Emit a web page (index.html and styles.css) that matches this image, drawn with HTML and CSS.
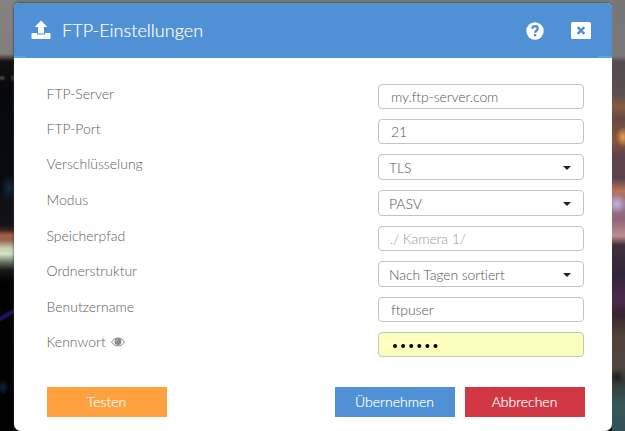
FILE: index.html
```html
<!DOCTYPE html>
<html lang="de">
<head>
<meta charset="utf-8">
<title>FTP-Einstellungen</title>
<link rel="stylesheet" href="styles.css">
</head>
<body>
<div class="scene scene-left"></div>
<main class="dialog">
  <header class="dialog-header">
    <svg class="icon-upload" viewBox="0 0 20 20"><path d="M10 .5l6.300 6.500H13v6.500H7V7H3.700z"/><path d="M1.200 13H6v1.500h8V13h4.800l.7.700v4.600l-.7.700H1.200L.5 18.300v-4.600z"/><path class="slot" d="M13.500 17h1.300m1.200 0h1.300"/></svg>
    <h1>FTP-Einstellungen</h1>
    <svg class="icon-help" viewBox="0 0 18 18"><circle cx="9" cy="9" r="8.700"/><path class="cut" d="M6.300 6.800C6.400 5 7.500 4.200 9.100 4.200c1.700 0 2.700.9 2.700 2.200 0 2-2.600 1.900-2.600 4.300"/><path class="dot" d="M7.900 12h2.400v2.200H7.900z"/></svg>
    <svg class="icon-close" viewBox="0 0 20 17"><rect width="20" height="17" rx="1.500"/><path class="cut" d="M6.700 5.200l6.600 6.600m0-6.600l-6.600 6.600"/></svg>
  </header>
  <form class="fields">
    <div class="row"><label>FTP-Server</label><div class="field">my.ftp-server.com</div></div>
    <div class="row"><label>FTP-Port</label><div class="field">21</div></div>
    <div class="row"><label>Verschlüsselung</label><div class="field select">TLS</div></div>
    <div class="row"><label>Modus</label><div class="field select">PASV</div></div>
    <div class="row"><label>Speicherpfad</label><div class="field hint">./ Kamera 1/</div></div>
    <div class="row"><label>Ordnerstruktur</label><div class="field select">Nach Tagen sortiert</div></div>
    <div class="row"><label>Benutzername</label><div class="field">ftpuser</div></div>
    <div class="row"><label>Kennwort</label><svg class="icon-eye" viewBox="0 0 14 10"><path class="lid" d="M.6 5C3.500-.2 10.500-.2 13.400 5 10.500 10.200 3.500 10.200.6 5z"/><circle cx="7" cy="4.500" r="3.400"/><path class="glint" d="M5.400 4.300C5.400 3.200 6 2.600 7 2.600"/></svg><div class="field password">
      <svg class="dots" viewBox="0 0 46 4"><circle cx="2" cy="2" r="2"/><circle cx="10.100" cy="2" r="2"/><circle cx="18.200" cy="2" r="2"/><circle cx="26.300" cy="2" r="2"/><circle cx="34.400" cy="2" r="2"/><circle cx="42.500" cy="2" r="2"/></svg></div></div>
  </form>
  <footer class="actions">
    <button class="test">Testen</button>
    <button class="apply">Übernehmen</button>
    <button class="cancel">Abbrechen</button>
  </footer>
</main>
<div class="scene scene-right"></div>
</body>
</html>
```
FILE: styles.css
```css
* { box-sizing: border-box; }
body {
  margin: 0;
  width: 625px;
  height: 431px;
  overflow: hidden;
  display: grid;
  grid-template-columns: 14px 598px 13px;
  background: linear-gradient(#7c7c7a 0 58px, #000 62px);
  font-family: Lato, "Liberation Sans", sans-serif;
  font-size: 14px;
  font-weight: 300;
  color: #555;
}
.scene-left {
  background:
    radial-gradient(ellipse 4px 3px at 2px 78px, #55584b, transparent),
    radial-gradient(ellipse 3px 4px at 13px 78px, #44483a, transparent),
    radial-gradient(ellipse 8px 13px at 9px 188px, #102b43, transparent),
    radial-gradient(ellipse 6px 8px at 3px 387px, #11243f, transparent),
    linear-gradient(150deg, transparent 36%, #2b1279 50%, transparent 64%) 0 305px / 14px 20px no-repeat,
    linear-gradient(#858381, #817f7d 54px, #15110f 61px, #07080d 90px, #090b12 180px, #15131a 225px, #36231f 230px, #a55e44 235px, #966151 240px, #c5ceb0 248px, #d0e6c4 254px, #677565 262px, #171818 270px, #020203 282px, #000 431px);
}
.scene-right {
  background:
    radial-gradient(ellipse 7px 10px at 11px 137px, #e9a052, transparent),
    radial-gradient(ellipse 10px 10px at 5px 204px, #c6b6da, transparent),
    radial-gradient(ellipse 8px 8px at 5px 377px, #221f1d, transparent),
    linear-gradient(#777, #7b7978 56px, #54494f 62px, #5b504d 95px, #865b42 106px, #664b43 119px, #8a563b 140px, #60434b 155px, #5c414b 178px, #ba7259 191px, #91718b 204px, #90677a 220px, #bf8b91 236px, #40303b 245px, #32253b 275px, #4c2a4d 300px, #34262e 315px, #514039 335px, #50463f 365px, #343a38 382px, #36575a 405px, #315158 431px);
}
.dialog {
  margin-top: 3px;
  height: 428px;
  display: flex;
  flex-direction: column;
  background: #fff;
  border-radius: 5px 5px 7px 7px;
  overflow: hidden;
  box-shadow: 0 0 3px #333;
}
.dialog-header {
  height: 55px;
  flex: none;
  display: flex;
  align-items: center;
  padding: 0 21px 0 17px;
  background:
    linear-gradient(#55a8e4, #55a8e4) 0 53px / 11px 2px no-repeat,
    linear-gradient(#55a8e4, #55a8e4) 584px 53px / 14px 2px no-repeat,
    #5091d6;
  color: #fff;
}
.dialog-header svg { fill: #fff; }
h1 {
  margin: -2px auto 0 11px;
  font-size: 18px;
  font-weight: 300;
  line-height: 24px;
  letter-spacing: .04px;
  -webkit-text-stroke: .2px #fff;
}
.icon-upload { width: 20px; height: 20px; margin-top: -2px; }
.icon-upload .slot { stroke: #b5d0ef; }
.icon-help { width: 18px; height: 18px; margin-right: 27px; }
.icon-close { width: 20px; height: 17px; }
.cut { fill: none; stroke: #5091d6; stroke-width: 2.4px; }
.dialog-header .dot { fill: #5091d6; }
.fields {
  display: flex;
  flex-direction: column;
  gap: 10px;
  padding: 26px 28px 0 32.500px;
}
.row { display: flex; align-items: flex-start; }
label { line-height: 20px; color: #5c5c5c; }
.field {
  width: 206px;
  height: 25px;
  margin-left: auto;
  padding: 0 12px;
  border: 1px solid #c4c4c4;
  border-radius: 4px;
  line-height: 23px;
  letter-spacing: -.1px;
}
.select {
  height: 26px;
  padding: 1px 12px 0 10px;
  display: flex;
  align-items: center;
  justify-content: space-between;
}
.select::after {
  content: "";
  border: 4px solid transparent;
  border-top-color: #222;
  border-bottom: 0;
}
.hint { color: #999; padding-left: 11px; }
.password { background: #faffbd; padding: 0 14px; display: flex; align-items: center; }
.dots { width: 46px; height: 4px; margin-top: 3px; fill: #000; }
.icon-eye { width: 14px; height: 10px; margin: 5px 0 0 5px; fill: #888; }
.lid { fill: none; stroke: #888; }
.glint { fill: none; stroke: #fff; stroke-width: .7px; }
.actions {
  display: flex;
  gap: 10px;
  padding: 30px 27px 0 33px;
}
button {
  width: 120px;
  height: 30px;
  padding: 0 1px 1px 0;
  border: 0;
  color: #fff;
  font: inherit;
  -webkit-text-stroke: .2px #fff;
}
.test { background: #ffa13e; margin-right: auto; }
.apply { background: #5091d6; }
.cancel { background: #d13844; }
```
